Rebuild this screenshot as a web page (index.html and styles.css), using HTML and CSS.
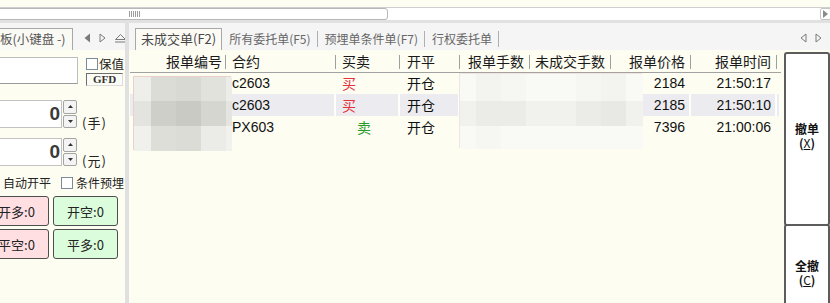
FILE: index.html
```html
<!DOCTYPE html>
<html lang="zh-CN">
<head>
<meta charset="utf-8">
<title>未成交单</title>
<link rel="stylesheet" href="styles.css">
</head>
<body>
<div class="app">
  <div class="topbar"></div>
  <div class="hscroll">
    <div class="thumb"><span class="grip"></span></div>
    <div class="hspacer"></div>
    <div class="sarrow"><svg width="5" height="8" viewBox="0 0 5 8"><polygon points="0,0 5,4 0,8" fill="#8a8a8a"/></svg></div>
  </div>
  <div class="band"></div>
  <div class="main">
    <div class="left">
      <div class="ltabs">
        <div class="ltab">板(小键盘 -)</div>
        <div class="tabnav lnav">
          <svg width="7" height="10" viewBox="0 0 7 10"><polygon points="6,0.5 6,9.5 0.5,5" fill="#7a7a7a"/></svg>
          <svg width="7" height="10" viewBox="0 0 7 10"><polygon points="1,1 1,9 6,5" fill="none" stroke="#7a7a7a" stroke-width="1"/></svg>
          <svg width="13" height="10" viewBox="0 0 13 10"><polygon points="1.5,6.5 11.5,6.5 6.5,1.5" fill="none" stroke="#7a7a7a" stroke-width="1"/><line x1="1" y1="9" x2="12" y2="9" stroke="#7a7a7a" stroke-width="1"/></svg>
        </div>
      </div>
      <div class="lbody">
        <div class="row1">
          <div class="textbox"></div>
          <div class="hedge">
            <div class="chk"><span class="box"></span>保值</div>
            <div class="gfd">GFD</div>
          </div>
        </div>
        <div class="spinrow">
          <div class="spin">0</div>
          <div class="spinbtns">
            <span class="sb"><svg width="5" height="3" viewBox="0 0 5 3"><polygon points="0,3 5,3 2.5,0" fill="#333"/></svg></span>
            <span class="sb"><svg width="5" height="3" viewBox="0 0 5 3"><polygon points="0,0 5,0 2.5,3" fill="#333"/></svg></span>
          </div>
          <span class="unit">(手)</span>
        </div>
        <div class="spinrow second">
          <div class="spin">0</div>
          <div class="spinbtns">
            <span class="sb"><svg width="5" height="3" viewBox="0 0 5 3"><polygon points="0,3 5,3 2.5,0" fill="#333"/></svg></span>
            <span class="sb"><svg width="5" height="3" viewBox="0 0 5 3"><polygon points="0,0 5,0 2.5,3" fill="#333"/></svg></span>
          </div>
          <span class="unit">(元)</span>
        </div>
        <div class="opts"><span>自动开平</span><span class="box optbox"></span><span>条件预埋</span></div>
        <div class="btngrid">
          <div class="ob pink">开多:0</div>
          <div class="ob green">开空:0</div>
          <div class="ob pink">平空:0</div>
          <div class="ob green">平多:0</div>
        </div>
      </div>
    </div>
    <div class="divider"></div>
    <div class="right">
      <div class="rtabs">
        <div class="rtab active">未成交单(F2)</div>
        <div class="rtab">所有委托单(F5)</div>
        <div class="rtab">预埋单条件单(F7)</div>
        <div class="rtab">行权委托单</div>
        <div class="tabnav rnav">
          <svg width="7" height="10" viewBox="0 0 7 10"><polygon points="6,1 6,9 1,5" fill="none" stroke="#7a7a7a" stroke-width="1"/></svg>
          <svg width="7" height="10" viewBox="0 0 7 10"><polygon points="1,1 1,9 6,5" fill="none" stroke="#7a7a7a" stroke-width="1"/></svg>
        </div>
      </div>
      <div class="rbody">
        <div class="tablewrap">
          <table class="grid">
            <colgroup>
              <col class="w1"><col class="w2"><col class="w3"><col class="w4"><col class="w5"><col class="w6"><col class="w7"><col class="w8"><col class="w9">
            </colgroup>
            <thead>
              <tr>
                <th class="r">报单编号</th>
                <th class="l">合约</th>
                <th class="l">买卖</th>
                <th class="l l7">开平</th>
                <th class="r">报单手数</th>
                <th class="r">未成交手数</th>
                <th class="r">报单价格</th>
                <th class="r">报单时间</th>
                <th class="fill"></th>
              </tr>
            </thead>
            <tbody>
              <tr>
                <td></td><td class="l">c2603</td><td class="l buy">买</td><td class="l l7">开仓</td><td></td><td></td><td class="r">2184</td><td class="r">21:50:17</td><td></td>
              </tr>
              <tr class="hl">
                <td></td><td class="l">c2603</td><td class="l buy">买</td><td class="l l7">开仓</td><td></td><td></td><td class="r">2185</td><td class="r">21:50:10</td><td></td>
              </tr>
              <tr>
                <td></td><td class="l">PX603</td><td class="l sell">卖</td><td class="l l7">开仓</td><td></td><td></td><td class="r">7396</td><td class="r">21:00:06</td><td></td>
              </tr>
            </tbody>
          </table>
          <div class="mosaic m1">
            <i class="a1"></i><i class="a2"></i><i class="a3"></i><i class="a4"></i><i class="a5"></i>
            <i class="b1"></i><i class="b2"></i><i class="b3"></i><i class="b4"></i><i class="b5"></i>
            <i class="c1"></i><i class="c2"></i><i class="c3"></i><i class="c4"></i><i class="c5"></i>
          </div>
          <div class="mosaic m2">
            <i class="p1"></i><i class="p2"></i><i class="p3"></i><i class="p1"></i><i class="p1"></i><i class="p3"></i><i class="p2"></i><i class="p1"></i>
            <i class="q1"></i><i class="q2"></i><i class="q2"></i><i class="q1"></i><i class="q1"></i><i class="q2"></i><i class="q3"></i><i class="q1"></i>
            <i class="p1"></i><i class="p3"></i><i class="p1"></i><i class="p1"></i><i class="p1"></i><i class="p1"></i><i class="p1"></i><i class="p1"></i>
          </div>
        </div>
        <div class="actions">
          <button class="act a-cancel"><span class="al">撤单</span><span class="al">(<u>X</u>)</span></button>
          <button class="act a-all"><span class="al">全撤</span><span class="al">(<u>C</u>)</span></button>
        </div>
      </div>
    </div>
  </div>
</div>
</body>
</html>
```
FILE: styles.css
```css
* { box-sizing: border-box; margin: 0; padding: 0; }
html, body { width: 830px; height: 303px; overflow: hidden; }
body {
  background: #fdfdf2;
  font-family: "Noto Sans CJK SC", "Noto Sans", sans-serif;
  color: #222;
}
.app { display: flex; flex-direction: column; height: 303px; overflow: hidden; }

/* top strip + scrollbar */
.topbar { flex: none; height: 8px; background: #fdfdf2; border-bottom: 1px solid #cfcfcf; }
.hscroll { flex: none; height: 12px; background: #fff; display: flex; align-items: stretch; }
.thumb {
  width: 392px; margin-left: -4px;
  border: 1px solid #b8b8b8; border-radius: 3px;
  display: flex; align-items: center; padding-left: 132px;
}
.grip {
  width: 11px; height: 6px;
  background: repeating-linear-gradient(90deg, #9c9c9c 0 1px, transparent 1px 2px);
}
.hspacer { flex: 1; }
.sarrow {
  width: 11px; margin-right: -1px;
  border: 1px solid #c4c4c4; border-radius: 2px;
  display: flex; align-items: center; justify-content: center;
}
.band { flex: none; height: 3px; background: #e1e1e1; }

.main { flex: 1; display: flex; min-height: 0; overflow: hidden; }

/* left panel */
.left { flex: none; width: 125px; overflow: hidden; display: flex; flex-direction: column; }
.ltabs { flex: none; height: 27px; background: #f5f5f5; display: flex; align-items: flex-end; }
.ltab {
  height: 22px; width: 73px; flex: none;
  border: 1px solid #a8a8a8; border-left: none; border-bottom: none;
  background: #fafaf4;
  font-size: 12.5px; line-height: 20px; color: #555; white-space: nowrap;
}
.tabnav { display: flex; align-items: center; align-self: center; margin-top: 3px; }
.lnav { margin-left: 11px; gap: 8px; }

.lbody { flex: 1; padding-top: 7px; display: flex; flex-direction: column; }
.row1 { display: flex; height: 28px; flex: none; }
.textbox {
  width: 82px; margin-left: -4px; height: 27px;
  background: #fff; border: 1px solid #bdbdbd; border-bottom-color: #9a9a9a;
}
.hedge { margin-left: 8px; width: 37px; display: flex; flex-direction: column; padding-top: 1px; }
.chk { display: flex; align-items: center; height: 12px; font-size: 12.5px; line-height: 12px; white-space: nowrap; color: #222; }
.box {
  display: inline-block; width: 12px; height: 12px; flex: none;
  background: #fff; border: 1px solid #7d8b99;
}
.chk .box { margin-right: 1px; }
.gfd {
  margin-top: 3px; height: 13px; width: 37px;
  border: 1px solid; border-color: #6e6e6e #dcdcdc #dcdcdc #6e6e6e;
  background: #fcfcf6;
  font-family: "Liberation Serif", serif; font-weight: bold; font-size: 11px; line-height: 11px;
  text-align: center; color: #333;
}

.spinrow { display: flex; height: 28px; margin-top: 15px; flex: none; }
.spinrow.second { margin-top: 10px; }
.spin {
  width: 66px; margin-left: -4px;
  background: #fff; border: 1px solid #c2c2c2;
  text-align: right; padding-right: 1px;
  font-family: "Liberation Sans", sans-serif; font-weight: bold; font-size: 19px; line-height: 26px; color: #3a3a3a;
}
.spinbtns { width: 14px; margin-left: 1px; display: flex; flex-direction: column; gap: 1px; padding: 0; }
.sb {
  flex: 1; border: 1px solid #a4a4a4; border-radius: 2px; background: #f4f4f4;
  display: flex; align-items: center; justify-content: center;
}
.unit { align-self: flex-end; margin-left: 5px; font-size: 13px; line-height: 14px; letter-spacing: 1px; color: #222; margin-bottom: -2px; }

.opts { margin-top: 10px; height: 13px; display: flex; align-items: center; padding-left: 3px; font-size: 12px; line-height: 13px; white-space: nowrap; color: #222; }
.optbox { width: 12px; height: 12px; margin-left: 10px; margin-right: 3px; }

.btngrid {
  margin-top: 7px; margin-left: -16px;
  display: grid; grid-template-columns: 65px 65px; grid-auto-rows: 30px; gap: 3px 4px;
}
.ob {
  border: 1px solid #4e4e4e; border-radius: 3px;
  display: flex; align-items: center; justify-content: center;
  font-size: 13px; color: #222; white-space: nowrap;
}
.pink { background: #ffdfe2; }
.green { background: #dcfddc; }

.divider { flex: none; width: 4px; background: #e0e0e0; }

/* right panel */
.right { flex: 1; display: flex; flex-direction: column; min-width: 0; }
.rtabs { flex: none; height: 27px; background: #f5f5f5; display: flex; align-items: flex-end; padding-left: 6px; }
.rtab {
  height: 22px; padding: 0 7px; font-size: 12px; line-height: 21px; color: #666; white-space: nowrap;
  background: linear-gradient(#b0b0b0, #b0b0b0) no-repeat right 3px / 1px 16px;
}
.rtab.active {
  padding: 0 5px; color: #484848; font-size: 13px;
  border: 1px solid #a8a8a8; border-bottom: none;
  background: #fbfbf4; line-height: 20px;
}
.rnav { margin-left: auto; gap: 8px; margin-right: 8px; }

.rbody { flex: 1; display: flex; min-height: 0; overflow: hidden; }
.tablewrap { flex: 1; position: relative; padding: 2px 0 0 1px; overflow: hidden; }
.grid { border-collapse: collapse; table-layout: fixed; width: 651px; }
.w1 { width: 96px; } .w2 { width: 110px; } .w3 { width: 64px; } .w4 { width: 60px; }
.w5 { width: 70px; } .w6 { width: 81px; } .w7 { width: 80px; } .w8 { width: 86px; } .w9 { width: 4px; }
.grid th {
  height: 20px; font-weight: normal; font-size: 14px; line-height: 19px; color: #1a1a1a; white-space: nowrap;
  border-bottom: 1px solid #a2a2a2;
  background: linear-gradient(#a0a0a0, #a0a0a0) no-repeat right 3px / 1px 14px;
}
.grid th.fill { background: none; }
.grid td {
  height: 22px; font-family: "Liberation Sans", "Noto Sans CJK SC", sans-serif; font-size: 14px; color: #111; white-space: nowrap;
}
.grid .r { text-align: right; padding-right: 6px; }
.grid th.r:first-child { padding-right: 4px; }
.grid .l { text-align: left; padding-left: 6px; }
.grid .l7 { padding-left: 7px; }
.grid td.l7, .grid td.buy, .grid td.sell { font-family: "Noto Sans CJK SC", sans-serif; font-size: 14px; }
.grid td.buy { color: #e4323c; }
.grid td.sell { color: #2a9a2a; padding-left: 21px; }
.grid tr.hl td { background: #ececf0; box-shadow: inset -2px 0 #fdfdf9; }

.mosaic { position: absolute; display: grid; }
.mosaic i { display: block; }
.m1 {
  left: 4px; top: 26px; width: 98px; height: 74px;
  grid-template-columns: 17px 25px 25px 25px 6px; grid-template-rows: 24px 25px 25px;
  border: 1px solid #ead0c8;
}
.a1 { background: #eeeeea; } .a2 { background: #dcdcd7; } .a3 { background: #d9d9d4; } .a4 { background: #e2e2dd; } .a5 { background: #ecece8; }
.b1 { background: #e3e3df; } .b2 { background: #cfcfca; } .b3 { background: #cacac5; } .b4 { background: #d6d6d1; } .b5 { background: #e4e4e0; }
.c1 { background: #f0f0ec; } .c2 { background: #deded9; } .c3 { background: #dcdcd7; } .c4 { background: #ebebe7; } .c5 { background: #f1f1ed; }
.m2 {
  left: 330px; top: 23px; width: 183px; height: 75px;
  grid-template-columns: 16px 25px 25px 25px 25px 25px 25px 17px; grid-template-rows: 27px 25px 23px;
  border: 1px solid #f2e4de;
}
.p1 { background: #f9f9f5; } .p2 { background: #f3f3ef; } .p3 { background: #f6f6f2; }
.q1 { background: #f1f1ee; } .q2 { background: #ebebe8; } .q3 { background: #e8e8e5; }

.actions { flex: none; width: 46px; display: flex; flex-direction: column; padding-top: 2px; overflow: hidden; }
.act {
  display: flex; flex-direction: column; align-items: center; justify-content: center;
  width: 46px; flex: none;
  background: #fff; border: 2px solid #5c5c5c; border-radius: 3px;
  font-family: "Noto Sans CJK SC", sans-serif; font-weight: bold; font-size: 12px; color: #111;
  padding: 0;
}
.al { display: block; height: 14px; line-height: 14px; }
.act u { text-decoration: underline; font-weight: normal; }
.a-cancel { height: 174px; padding-bottom: 6px; }
.a-all { height: 97px; margin-top: -2px; }
```
